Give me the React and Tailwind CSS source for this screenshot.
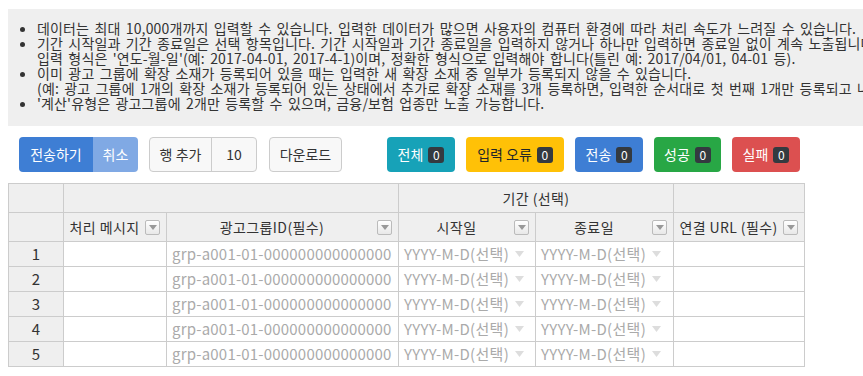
import React from 'react';

const font = { fontFamily: '"Noto Sans CJK KR", "Noto Sans", sans-serif' };

function FilterIcon() {
  return (
    <span className="inline-flex items-center justify-center w-[15px] h-[15px] border border-[#bbb] rounded-[2px] bg-gradient-to-b from-white to-[#e8e8e8] shrink-0">
      <svg width="8" height="5" viewBox="0 0 8 5">
        <path d="M0 0 L8 0 L4 5 Z" fill="#999" />
      </svg>
    </span>
  );
}

function HeadCell({ label }) {
  return (
    <div className="flex items-center h-full pr-[6px]">
      <span className="flex-1 text-center whitespace-nowrap">{label}</span>
      <FilterIcon />
    </div>
  );
}

function DateCell() {
  return (
    <td className="border border-[#ccc] bg-white px-[5px] text-[#aaa] text-[15px] tracking-[0.3px] whitespace-nowrap overflow-hidden">
      <div className="flex items-center gap-[6px]">
        <span>YYYY-M-D(선택)</span>
        <svg width="9" height="6" viewBox="0 0 9 6">
          <path d="M0 0 L9 0 L4.5 6 Z" fill="#ddd" />
        </svg>
      </div>
    </td>
  );
}

function Badge() {
  return (
    <span className="inline-flex items-center justify-center w-[16px] h-[16px] rounded-[3px] bg-[#343a40] text-white text-[12px] leading-none">
      0
    </span>
  );
}

const statusButtons = [
  { label: '전체', cls: 'w-[68px] bg-[#17a2b8] text-white' },
  { label: '입력 오류', cls: 'w-[98px] bg-[#ffc107] text-[#212529]' },
  { label: '전송', cls: 'w-[68px] bg-[#3e7ed4] text-white' },
  { label: '성공', cls: 'w-[67px] bg-[#28a745] text-white' },
  { label: '실패', cls: 'w-[68px] bg-[#dc5050] text-white' },
];

export default function App() {
  const rows = [1, 2, 3, 4, 5];
  return (
    <div className="w-full h-[376px] overflow-hidden bg-white text-[#333]" style={font}>
      {/* Notice */}
      <div className="ml-[8px] mt-[9px] w-[1000px] bg-[#efefef] pt-[12px] pb-[15px]">
        <ul className="list-disc pl-[29px] text-[14px] leading-[15px] tracking-[0.15px] [word-spacing:2px] whitespace-nowrap">
          <li>데이터는 최대 10,000개까지 입력할 수 있습니다. 입력한 데이터가 많으면 사용자의 컴퓨터 환경에 따라 처리 속도가 느려질 수 있습니다.</li>
          <li>
            기간 시작일과 기간 종료일은 선택 항목입니다. 기간 시작일과 기간 종료일을 입력하지 않거나 하나만 입력하면 종료일 없이 계속 노출됩니다.
            <br />
            입력 형식은 '연도-월-일'(예: 2017-04-01, 2017-4-1)이며, 정확한 형식으로 입력해야 합니다(틀린 예: 2017/04/01, 04-01 등).
          </li>
          <li>
            이미 광고 그룹에 확장 소재가 등록되어 있을 때는 입력한 새 확장 소재 중 일부가 등록되지 않을 수 있습니다.
            <br />
            (예: 광고 그룹에 1개의 확장 소재가 등록되어 있는 상태에서 추가로 확장 소재를 3개 등록하면, 입력한 순서대로 첫 번째 1개만 등록되고 나머지는 등록되지 않습니다.)
          </li>
          <li>'계산'유형은 광고그룹에 2개만 등록할 수 있으며, 금융/보험 업종만 노출 가능합니다.</li>
        </ul>
      </div>

      {/* Toolbar */}
      <div className="flex items-center h-[35px] mt-[11px] pl-[19px] text-[14px]">
        <div className="flex h-full rounded-[4px] overflow-hidden text-white">
          <button className="w-[74px] bg-[#3e7ed4]">전송하기</button>
          <button className="w-[45px] bg-[#80a9e4]">취소</button>
        </div>
        <div className="flex h-full ml-[11px] border border-[#ccc] rounded-[4px] bg-[#f8f8f8] text-[#333]">
          <span className="w-[62px] flex items-center justify-center border-r border-[#ccc]">행 추가</span>
          <span className="w-[44px] flex items-center justify-center">10</span>
        </div>
        <button className="h-full w-[73px] ml-[12px] border border-[#ccc] rounded-[4px] bg-[#f8f8f8] text-[#333]">다운로드</button>
        <div className="flex h-full ml-[45px] gap-[11px]">
          {statusButtons.map((b) => (
            <button key={b.label} className={`flex items-center justify-center gap-[5px] h-full rounded-[4px] ${b.cls}`}>
              <span>{b.label}</span>
              <Badge />
            </button>
          ))}
        </div>
      </div>

      {/* Grid */}
      <table className="ml-[8px] mt-[11px] w-[796px] table-fixed border-collapse text-[14px]">
        <colgroup>
          <col className="w-[55px]" />
          <col className="w-[103px]" />
          <col className="w-[232px]" />
          <col className="w-[137px]" />
          <col className="w-[138px]" />
          <col className="w-[131px]" />
        </colgroup>
        <thead className="bg-[#efefef] text-[#333] tracking-[0.4px]">
          <tr className="h-[29px]">
            <th className="border border-[#ccc] font-normal"></th>
            <th colSpan={2} className="border border-[#ccc] font-normal"></th>
            <th colSpan={2} className="border border-[#ccc] font-normal">기간 (선택)</th>
            <th className="border border-[#ccc] font-normal"></th>
          </tr>
          <tr className="h-[29px]">
            <th className="border border-[#ccc] font-normal"></th>
            <th className="border border-[#ccc] font-normal p-0"><HeadCell label="처리 메시지" /></th>
            <th className="border border-[#ccc] font-normal p-0"><HeadCell label="광고그룹ID(필수)" /></th>
            <th className="border border-[#ccc] font-normal p-0"><HeadCell label="시작일" /></th>
            <th className="border border-[#ccc] font-normal p-0"><HeadCell label="종료일" /></th>
            <th className="border border-[#ccc] font-normal p-0"><HeadCell label="연결 URL (필수)" /></th>
          </tr>
        </thead>
        <tbody>
          {rows.map((n) => (
            <tr key={n} className="h-[25px]">
              <td className="border border-[#ccc] bg-[#efefef] text-center text-[15px]">{n}</td>
              <td className="border border-[#ccc] bg-white"></td>
              <td className="border border-[#ccc] bg-white px-[5px] text-[#aaa] text-[15px] tracking-[0.2px] whitespace-nowrap overflow-hidden">grp-a001-01-000000000000000</td>
              <DateCell />
              <DateCell />
              <td className="border border-[#ccc] bg-white"></td>
            </tr>
          ))}
        </tbody>
      </table>
    </div>
  );
}
